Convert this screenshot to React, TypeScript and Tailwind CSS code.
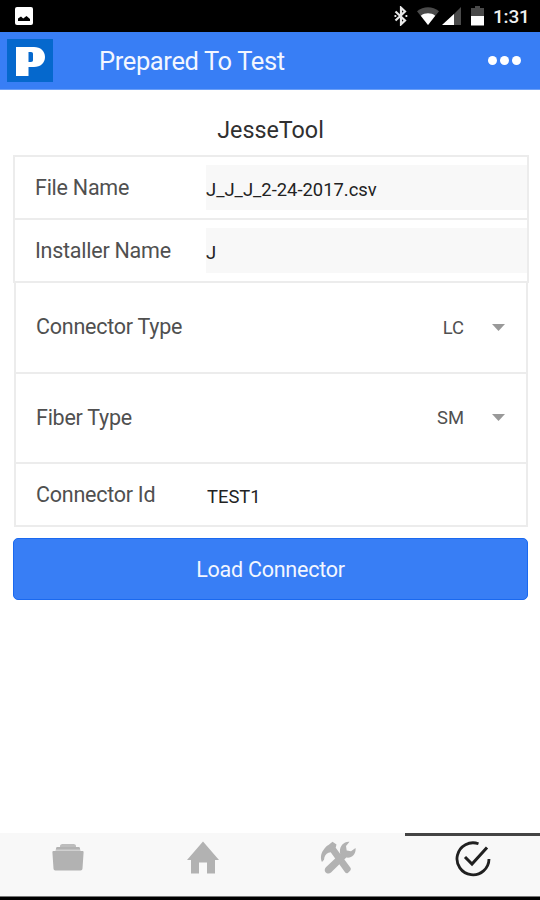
import React, { useState } from 'react';

const StatusBar: React.FC = () => (
  <div className="h-8 bg-black flex items-center pl-[15px] pr-[11px]">
    <svg width="18" height="18" viewBox="0 0 18 18">
      <rect width="18" height="18" rx="2" fill="#fff" />
      <path d="M3 14V11.500l3-2 2.200 2L11.500 9l3.500 3v2z" fill="#000" />
    </svg>
    <div className="ml-auto flex items-center">
      <svg width="14" height="20" viewBox="0 0 14 20" fill="none" stroke="#e8e8e8" strokeWidth="2.2">
        <path d="M1.500 5.500 11 14.500 7 18.300V1.700L11 5.500 1.500 14.500" />
        <path d="M.5 10h1.800M11.500 10h1.800" />
      </svg>
      <svg className="ml-[8px]" width="24" height="20" viewBox="0 0 24 20">
        <path d="M1 5.200C7.500-.2 16.500-.2 23 5.200L12 19z" fill="#4a4a4a" />
        <path d="M4.800 9.700C9 6.500 15 6.500 19.200 9.700L12 19z" fill="#fff" />
      </svg>
      <svg className="ml-[2px]" width="19" height="20" viewBox="0 0 19 20">
        <path d="M19 1v18H1z" fill="#4a4a4a" />
        <path d="M12 8v11H0z" fill="#fff" />
      </svg>
      <svg className="ml-[10px]" width="13" height="20" viewBox="0 0 13 20">
        <path d="M4 0h5v2h4v9H0V2h4z" fill="#4a4a4a" />
        <path d="M0 10h13v9.500H0z" fill="#fff" />
      </svg>
      <span className="ml-[9px] w-[36px] pt-px text-[19px] tracking-[-0.2px] leading-8 font-medium text-[#f0f0f0] whitespace-nowrap">1:31</span>
    </div>
  </div>
);

const Header: React.FC = () => (
  <div className="h-[58px] bg-[#387ef5] border-b border-[#6b9ff7] flex items-center pl-[7px] pr-[19px]">
    <svg width="46" height="43" viewBox="0 0 46 43">
      <rect width="46" height="43" fill="#0568cd" />
      <path
        fillRule="evenodd"
        fill="#fff"
        d="M9 8h18c6.500 0 11 4 11 10s-4.500 10-11 10h-5.500v9H9zM21.500 13v10H24c1.500 0 2-.7 2-2v-6c0-1.300-.5-2-2-2z"
      />
    </svg>
    <h1 className="ml-[46px] text-[25.500px] tracking-[-0.37px] leading-[56px] text-[#f2f6ff] whitespace-nowrap">Prepared To Test</h1>
    <button className="ml-auto flex gap-[3px]" aria-label="More">
      <span className="size-[9px] rounded-full bg-white" />
      <span className="size-[9px] rounded-full bg-white" />
      <span className="size-[9px] rounded-full bg-white" />
    </button>
  </div>
);

interface RowProps {
  label: string;
  value: string;
}

const ReadOnlyRow: React.FC<RowProps> = ({ label, value }) => (
  <div className="h-[63px] border-b-2 border-[#ececec] flex items-center pl-5">
    <span className="w-[171px] pt-[2px] text-[21.500px] tracking-[-0.25px] text-[#505050] whitespace-nowrap">{label}</span>
    <input
      readOnly
      value={value}
      className="flex-1 min-w-0 h-[45px] bg-[#f8f8f8] pt-[3px] text-[18.400px] text-[#222] outline-none"
    />
  </div>
);

const SelectRow: React.FC<RowProps> = ({ label, value }) => (
  <div className="flex-1 border-b-2 border-[#ececec] flex items-center pl-5 pr-[21px]">
    <span className="text-[21.500px] tracking-[-0.25px] text-[#505050] whitespace-nowrap">{label}</span>
    <span className="ml-auto pt-px text-[18.400px] text-[#505050]">{value}</span>
    <svg className="ml-[28px]" width="13" height="7" viewBox="0 0 13 7">
      <path d="M0 0h13L6.500 7z" fill="#999" />
    </svg>
  </div>
);

const tabs = [
  {
    name: 'Files',
    icon: (
      <svg width="34" height="34" viewBox="0 0 34 34" fill="#b2b2b2">
        <path d="M9 4.500C9.500 3.500 10.500 3 12 3h10c1.500 0 2.500.5 3 1.500V6H9z" fill="#bdbdbd" />
        <path d="M5 9V7.500C5 6.500 5.600 6 6.500 6h21c.9 0 1.500.5 1.500 1.500V9z" />
        <path d="M4.500 8.500h25V10h-25z" fill="#d0d0d0" />
        <path d="M2.500 10h29c.8 0 1.200.6 1.100 1.300L31.500 27.500c-.1 1.300-.7 2-2 2h-25c-1.300 0-1.900-.7-2-2L1.400 11.300c-.1-.7.300-1.300 1.100-1.300z" />
      </svg>
    ),
  },
  {
    name: 'Home',
    icon: (
      <svg width="34" height="34" viewBox="0 0 34 34" fill="#b2b2b2">
        <path d="M17 .5 33 19h-4v13.500h-8V21.500h-8v11H5V19H1z" />
      </svg>
    ),
  },
  {
    name: 'Tools',
    icon: (
      <svg width="36" height="34" viewBox="0 0 36 34" fill="#b2b2b2">
        <path d="M12.500.8 16.500 3.600l-.8 3.200L30.300 26.500c.8 1 .7 2.200-.2 3.200l-2 2c-.9.800-2 .7-2.900-.2L10.700 11.300l-2.200.5c-2.600 1-4.200 3.400-4.500 7L2 21C.2 17.500.8 12.500 3.300 9.200 5 6.500 6.500 5 8.500 4z" />
        <path d="M29.500.8 26 5l.7 4.500 4.300.8 4.500-3.200c.9 5.200-3.400 10.500-9.200 9.400L11 31.600c-1.700 1.500-4.200 1.200-5.500-.3-1.200-1.500-1-3.700.4-5L20.200 12.800C18.700 6.200 23.200.2 29.500.8z" />
      </svg>
    ),
  },
  {
    name: 'Test',
    icon: (
      <svg width="36" height="36" viewBox="0 0 36 36" fill="none" stroke="#202020" strokeWidth="2.800">
        <path d="M23.500 2.800A16 16 0 1 0 34 18" />
        <path d="m10 16 7 7L32 6.500" strokeWidth="3" />
      </svg>
    ),
  },
];

const App: React.FC = () => {
  const [connectorId, setConnectorId] = useState('TEST1');
  const [activeTab, setActiveTab] = useState('Test');

  return (
    <div className="w-[540px] h-[900px] bg-white flex flex-col overflow-hidden font-[Roboto,sans-serif]">
      <StatusBar />
      <Header />
      <main className="flex-1 pt-[23px]">
        <h2 className="h-[42px] pl-px leading-[35px] text-center text-[23.300px] text-[#303030]">JesseTool</h2>
        <div className="ml-[13px] w-[516px] border-2 border-b-0 border-[#ececec]">
          <ReadOnlyRow label="File Name" value="J_J_J_2-24-2017.csv" />
          <ReadOnlyRow label="Installer Name" value="J" />
        </div>
        <div className="ml-[14px] w-[514px] h-[244px] border-x-2 border-[#ececec] flex flex-col">
          <SelectRow label="Connector Type" value="LC" />
          <SelectRow label="Fiber Type" value="SM" />
          <div className="h-[63px] border-b-2 border-[#ececec] flex items-center pl-5">
            <span className="w-[171px] pt-[2px] text-[21.500px] tracking-[-0.25px] text-[#505050] whitespace-nowrap">Connector Id</span>
            <input
              value={connectorId}
              onChange={e => setConnectorId(e.target.value)}
              className="flex-1 min-w-0 pt-[5px] text-[18.400px] text-[#222] outline-none"
            />
          </div>
        </div>
        <button className="block ml-[13px] mt-[11px] w-[515px] h-[62px] pt-[2px] rounded-[5px] border border-[#1a69f0] bg-[#387ef5] text-[21.500px] tracking-[-0.25px] text-[#f2f6ff]">
          Load Connector
        </button>
      </main>
      <nav className="h-[63px] bg-[#f8f8f8] flex">
        {tabs.map(tab => (
          <button
            key={tab.name}
            aria-label={tab.name}
            onClick={() => setActiveTab(tab.name)}
            className={`flex-1 flex justify-center pt-[5px] border-t-[3px] ${
              activeTab === tab.name ? 'border-[#444]' : 'border-transparent'
            }`}
          >
            {tab.icon}
          </button>
        ))}
      </nav>
      <div className="h-[4px] border-t border-[#777] bg-black" />
    </div>
  );
};

export default App;
